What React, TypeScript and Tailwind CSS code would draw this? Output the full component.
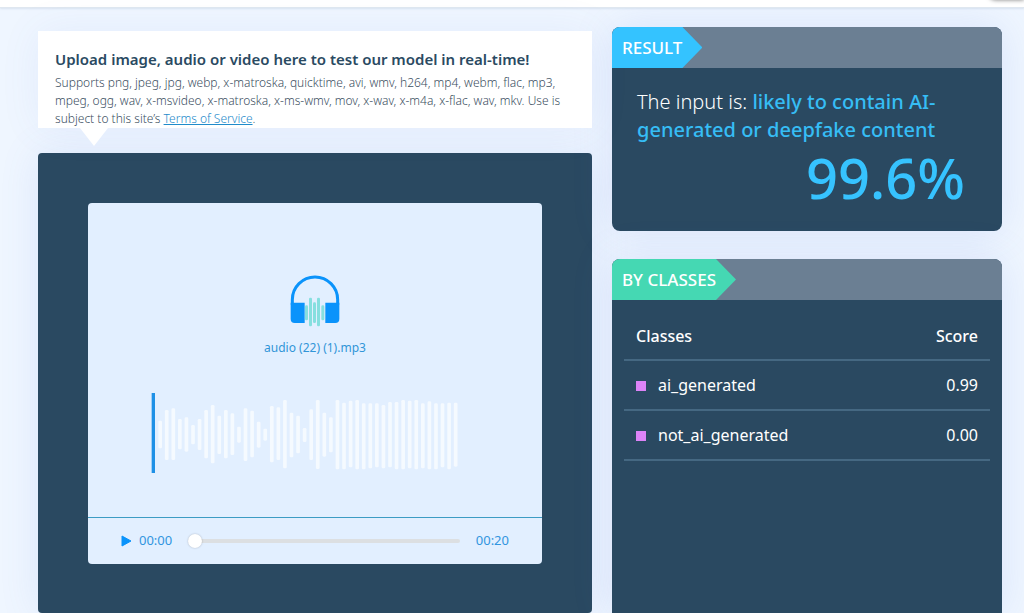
import { useState } from 'react';
import type { ReactNode } from 'react';

interface ClassScore {
  name: string;
  score: string;
}

const classScores: ClassScore[] = [
  { name: 'ai_generated', score: '0.99' },
  { name: 'not_ai_generated', score: '0.00' },
];

// [top, bottom] of each bar in the waveform
const bars: [number, number][] = [
  [83, 166], [51, 201], [46, 201], [78, 169], [73, 176], [96, 154], [78, 171], [51, 196],
  [36, 211], [68, 183], [51, 196], [61, 186], [101, 149], [46, 204], [53, 193], [86, 164],
  [107, 143], [39, 208], [43, 201], [21, 226], [59, 193], [68, 181], [105, 147], [49, 201],
  [21, 228], [59, 191], [73, 178], [21, 229], [29, 229], [23, 223], [21, 229], [31, 229],
  [31, 226], [31, 223], [36, 226], [27, 223], [27, 229], [21, 229], [23, 226], [21, 229],
  [31, 226], [25, 229], [31, 229], [31, 223], [29, 229], [29, 221],
];

function HeadphonesIcon() {
  return (
    <svg viewBox="0 0 150 156" className="h-[52px] w-[50px]" aria-hidden="true">
      <path d="M7 90V74a68 68 0 0 1 136 0v16" fill="none" stroke="#0a93fb" strokeWidth="9" />
      <path d="M2 83h42v61H14a12 12 0 0 1-12-12z" fill="#0a93fb" />
      <path d="M148 83h-42v61h30a12 12 0 0 0 12-12z" fill="#0a93fb" />
      <g fill="#86dfdf">
        <rect x="45" y="91" width="9" height="45" rx="4" />
        <rect x="57" y="68" width="9" height="86" rx="4" />
        <rect x="69" y="82" width="9" height="62" rx="4" />
        <rect x="81" y="68" width="9" height="86" rx="4" />
        <rect x="94" y="91" width="9" height="45" rx="4" />
      </g>
    </svg>
  );
}

function Waveform() {
  return (
    <svg viewBox="0 0 990 240" className="w-full" aria-hidden="true">
      <rect x="5" y="0" width="10" height="240" fill="#1e90e6" />
      {bars.map(([top, bottom], i) => (
        <rect key={i} x={25 + i * 19.7} y={top} width="11" height={bottom - top} rx="4" fill="#f5faff" />
      ))}
    </svg>
  );
}

function UploadNote() {
  return (
    <div className="relative bg-white pt-[18px] pr-3 pl-[17px] shadow-[0_0_40px_rgba(90,120,220,0.08)]">
      <h1 className="text-[15px] leading-5 font-semibold text-[#2a4a62]">
        Upload image, audio or video here to test our model in real-time!
      </h1>
      <p className="mt-[5px] text-[12px] leading-[18px] font-light text-[#3c4f5f]">
        Supports png, jpeg, jpg, webp, x-matroska, quicktime, avi, wmv, h264, mp4, webm, flac, mp3,
        mpeg, ogg, wav, x-msvideo, x-matroska, x-ms-wmv, mov, x-wav, x-m4a, x-flac, wav, mkv. Use is
        subject to this site’s{' '}
        <a href="#terms" className="text-[#1f8bcb] underline">Terms of Service</a>.
      </p>
      <div className="absolute top-full left-[42px] h-[18px] w-7 bg-white [clip-path:polygon(0_0,100%_0,50%_100%)]" />
    </div>
  );
}

function Player() {
  const [position, setPosition] = useState(0);

  return (
    <div className="rounded bg-[#2a4961] p-[50px] pb-[49px] shadow-[0_0_40px_rgba(90,120,220,0.12)]">
      <div className="overflow-hidden rounded bg-[#e2efff]">
        <div className="flex flex-col items-center px-[62px] pt-[72px] pb-11">
          <HeadphonesIcon />
          <p className="mt-3 mb-9 text-[12px] leading-[18px] text-[#3195d8]">audio (22) (1).mp3</p>
          <Waveform />
        </div>
        <div className="flex h-[47px] items-center border-t border-[#3c9cc4] px-[33px] text-[13px] text-[#3195e0]">
          <button type="button" aria-label="Play" className="mr-[7px] cursor-pointer">
            <svg viewBox="0 0 11 12" className="h-3 w-[11px]" aria-hidden="true">
              <path d="M1 1l9 5-9 5z" fill="#0a93fb" stroke="#0a93fb" strokeLinejoin="round" />
            </svg>
          </button>
          <span>00:00</span>
          <input
            type="range"
            aria-label="Seek"
            min={0}
            max={20}
            value={position}
            onChange={(e) => setPosition(Number(e.target.value))}
            className="mx-4 h-4 min-w-0 flex-1 cursor-pointer appearance-none bg-transparent [&::-webkit-slider-runnable-track]:h-1 [&::-webkit-slider-runnable-track]:rounded-full [&::-webkit-slider-runnable-track]:bg-[#dcdfe2] [&::-webkit-slider-thumb]:-mt-[5px] [&::-webkit-slider-thumb]:size-3.5 [&::-webkit-slider-thumb]:appearance-none [&::-webkit-slider-thumb]:rounded-full [&::-webkit-slider-thumb]:bg-white [&::-webkit-slider-thumb]:shadow-[0_0_2px_rgba(0,0,0,0.25)]"
          />
          <span>00:20</span>
        </div>
      </div>
    </div>
  );
}

interface CardProps {
  title: string;
  tagClass: string;
  className: string;
  children: ReactNode;
}

function Card({ title, tagClass, className, children }: CardProps) {
  return (
    <section className={`overflow-hidden bg-[#2a4961] shadow-[0_0_40px_rgba(90,120,220,0.15)] ${className}`}>
      <header className="flex h-[41px] bg-[#6b7f93]">
        <h2
          className={`flex items-center pr-5 pl-2.5 text-[17px] font-medium text-white [clip-path:polygon(0_0,calc(100%-20px)_0,100%_50%,calc(100%-20px)_100%,0_100%)] ${tagClass}`}
        >
          {title}
        </h2>
      </header>
      {children}
    </section>
  );
}

export default function App() {
  return (
    <div className="flex min-h-screen flex-col bg-[#eff6ff] font-['Noto_Sans','Open_Sans',sans-serif]">
      <div className="relative h-2 border-b border-[#dfe7f0] bg-white shadow-[0_1px_2px_rgba(60,90,130,0.12)]">
        <div className="absolute -top-4 right-0 h-4 w-9 rounded-bl-lg bg-white shadow-[0_0_4px_rgba(0,0,0,0.5)]" />
      </div>
      <main className="grid flex-1 grid-cols-[554fr_390fr] gap-5 pr-[22px] pl-[38px]">
        <div className="flex flex-col gap-[25px] pt-[23px]">
          <UploadNote />
          <Player />
        </div>
        <div className="flex flex-col gap-7 pt-[19px]">
          <Card title="RESULT" tagClass="bg-[#34c3ff]" className="rounded-lg">
            <div className="px-[25px] pt-5 pb-5">
              <p className="text-[20px] leading-7 font-light text-white">
                The input is:{' '}
                <span className="font-medium text-[#36bdf5]">
                  likely to contain AI-generated or deepfake content
                </span>
              </p>
              <p className="pr-3 text-right text-[56px] leading-[67px] font-medium text-[#36c3ff]">99.6%</p>
            </div>
          </Card>
          <Card title="BY CLASSES" tagClass="bg-[#45d8b3]" className="flex-1 rounded-t-lg">
            <div className="px-3 pt-2.5">
              <table className="w-full text-[16px] text-white">
                <thead>
                  <tr className="h-[50px] border-b-2 border-[#456882]">
                    <th className="pt-0.5 pl-3 text-left font-medium">Classes</th>
                    <th className="pt-0.5 pr-3 text-right font-medium">Score</th>
                  </tr>
                </thead>
                <tbody>
                  {classScores.map((row) => (
                    <tr key={row.name} className="h-[50px] border-b-2 border-[#456882]">
                      <td className="pl-3">
                        <span className="mr-3 inline-block size-2.5 bg-[#dc83f7]" />
                        {row.name}
                      </td>
                      <td className="pr-3 text-right">{row.score}</td>
                    </tr>
                  ))}
                </tbody>
              </table>
            </div>
          </Card>
        </div>
      </main>
    </div>
  );
}
